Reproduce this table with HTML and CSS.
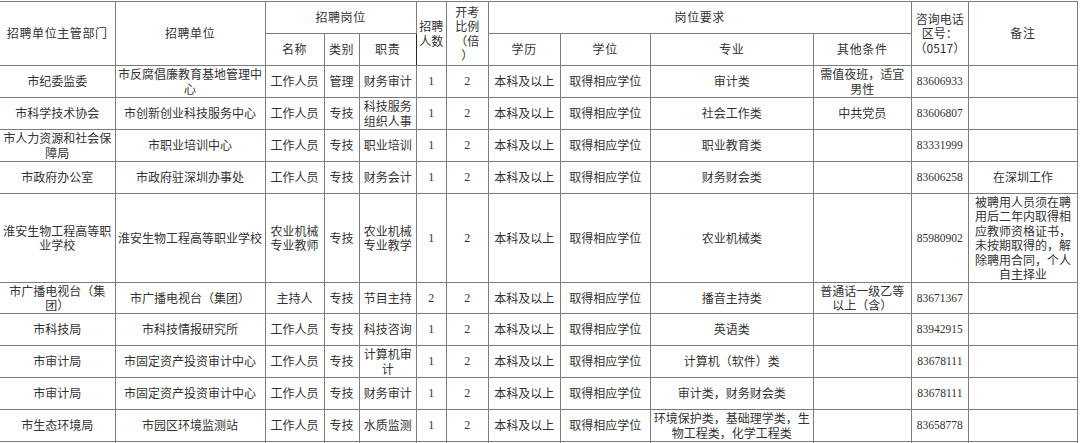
FILE: index.html
```html
<!DOCTYPE html>
<html lang="zh-CN">
<head>
<meta charset="utf-8">
<title>招聘岗位表</title>
<link rel="stylesheet" href="styles.css">
</head>
<body>
<div class="page">
<table class="jobs">
  <colgroup>
    <col class="w115"><col class="w150"><col class="w59"><col class="w35"><col class="w57">
    <col class="w30"><col class="w42"><col class="w72"><col class="w90"><col class="w163">
    <col class="w98"><col class="w57"><col class="w109">
  </colgroup>
  <thead>
    <tr>
      <th rowspan="2" class="first"><div class="c h2 sp">招聘单位主管部门</div></th>
      <th rowspan="2"><div class="c h2 sp">招聘单位</div></th>
      <th colspan="3"><div class="c h1 sp">招聘岗位</div></th>
      <th rowspan="2" class="dark"><div class="c h2">招聘人数</div></th>
      <th rowspan="2"><div class="c h2 ratio">开考比例（倍）</div></th>
      <th colspan="4"><div class="c h1 sp">岗位要求</div></th>
      <th rowspan="2"><div class="c h2">咨询电话区号：（0517）</div></th>
      <th rowspan="2"><div class="c h2 sp">备注</div></th>
    </tr>
    <tr>
      <th><div class="c h1 sp">名称</div></th>
      <th class="dark"><div class="c h1 sp">类别</div></th>
      <th class="dark"><div class="c h1 sp">职责</div></th>
      <th><div class="c h1 sp">学历</div></th>
      <th><div class="c h1 sp">学位</div></th>
      <th><div class="c h1 sp">专业</div></th>
      <th><div class="c h1 sp">其他条件</div></th>
    </tr>
  </thead>
  <tbody>
    <tr>
      <td class="first"><div class="c">市纪委监委</div></td>
      <td><div class="c">市反腐倡廉教育基地管理中心</div></td>
      <td><div class="c">工作人员</div></td>
      <td class="dark"><div class="c">管理</div></td>
      <td class="dark"><div class="c">财务审计</div></td>
      <td class="dark"><div class="c num">1</div></td>
      <td><div class="c num">2</div></td>
      <td><div class="c">本科及以上</div></td>
      <td><div class="c">取得相应学位</div></td>
      <td><div class="c">审计类</div></td>
      <td><div class="c">需值夜班，适宜男性</div></td>
      <td><div class="c tel">83606933</div></td>
      <td><div class="c"></div></td>
    </tr>
    <tr>
      <td class="first"><div class="c">市科学技术协会</div></td>
      <td><div class="c">市创新创业科技服务中心</div></td>
      <td><div class="c">工作人员</div></td>
      <td class="dark"><div class="c">专技</div></td>
      <td class="dark"><div class="c">科技服务组织人事</div></td>
      <td class="dark"><div class="c num">1</div></td>
      <td><div class="c num">2</div></td>
      <td><div class="c">本科及以上</div></td>
      <td><div class="c">取得相应学位</div></td>
      <td><div class="c">社会工作类</div></td>
      <td><div class="c">中共党员</div></td>
      <td><div class="c tel">83606807</div></td>
      <td><div class="c"></div></td>
    </tr>
    <tr>
      <td class="first"><div class="c">市人力资源和社会保障局</div></td>
      <td><div class="c">市职业培训中心</div></td>
      <td><div class="c">工作人员</div></td>
      <td class="dark"><div class="c">专技</div></td>
      <td class="dark"><div class="c">职业培训</div></td>
      <td class="dark"><div class="c num">1</div></td>
      <td><div class="c num">2</div></td>
      <td><div class="c">本科及以上</div></td>
      <td><div class="c">取得相应学位</div></td>
      <td><div class="c">职业教育类</div></td>
      <td><div class="c"></div></td>
      <td><div class="c tel">83331999</div></td>
      <td><div class="c"></div></td>
    </tr>
    <tr>
      <td class="first"><div class="c">市政府办公室</div></td>
      <td><div class="c">市政府驻深圳办事处</div></td>
      <td><div class="c">工作人员</div></td>
      <td class="dark"><div class="c">专技</div></td>
      <td class="dark"><div class="c">财务会计</div></td>
      <td class="dark"><div class="c num">1</div></td>
      <td><div class="c num">2</div></td>
      <td><div class="c">本科及以上</div></td>
      <td><div class="c">取得相应学位</div></td>
      <td><div class="c">财务财会类</div></td>
      <td><div class="c"></div></td>
      <td><div class="c tel">83606258</div></td>
      <td><div class="c">在深圳工作</div></td>
    </tr>
    <tr>
      <td class="first"><div class="c tall">淮安生物工程高等职业学校</div></td>
      <td><div class="c tall">淮安生物工程高等职业学校</div></td>
      <td><div class="c tall">农业机械专业教师</div></td>
      <td class="dark"><div class="c tall">专技</div></td>
      <td class="dark"><div class="c tall">农业机械专业教学</div></td>
      <td class="dark"><div class="c tall num">1</div></td>
      <td><div class="c tall num">2</div></td>
      <td><div class="c tall">本科及以上</div></td>
      <td><div class="c tall">取得相应学位</div></td>
      <td><div class="c tall">农业机械类</div></td>
      <td><div class="c tall"></div></td>
      <td><div class="c tall tel">85980902</div></td>
      <td><div class="c tall">被聘用人员须在聘用后二年内取得相应教师资格证书，未按期取得的，解除聘用合同，个人自主择业</div></td>
    </tr>
    <tr>
      <td class="first"><div class="c short">市广播电视台（集团）</div></td>
      <td><div class="c short">市广播电视台（集团）</div></td>
      <td><div class="c short">主持人</div></td>
      <td class="dark"><div class="c short">专技</div></td>
      <td class="dark"><div class="c short">节目主持</div></td>
      <td class="dark"><div class="c short num">2</div></td>
      <td><div class="c short num">2</div></td>
      <td><div class="c short">本科及以上</div></td>
      <td><div class="c short">取得相应学位</div></td>
      <td><div class="c short">播音主持类</div></td>
      <td><div class="c short">普通话一级乙等以上（含）</div></td>
      <td><div class="c short tel">83671367</div></td>
      <td><div class="c short"></div></td>
    </tr>
    <tr>
      <td class="first"><div class="c">市科技局</div></td>
      <td><div class="c">市科技情报研究所</div></td>
      <td><div class="c">工作人员</div></td>
      <td class="dark"><div class="c">专技</div></td>
      <td class="dark"><div class="c">科技咨询</div></td>
      <td class="dark"><div class="c num">1</div></td>
      <td><div class="c num">2</div></td>
      <td><div class="c">本科及以上</div></td>
      <td><div class="c">取得相应学位</div></td>
      <td><div class="c">英语类</div></td>
      <td><div class="c"></div></td>
      <td><div class="c tel">83942915</div></td>
      <td><div class="c"></div></td>
    </tr>
    <tr>
      <td class="first"><div class="c">市审计局</div></td>
      <td><div class="c">市固定资产投资审计中心</div></td>
      <td><div class="c">工作人员</div></td>
      <td class="dark"><div class="c">专技</div></td>
      <td class="dark"><div class="c">计算机审计</div></td>
      <td class="dark"><div class="c num">1</div></td>
      <td><div class="c num">2</div></td>
      <td><div class="c">本科及以上</div></td>
      <td><div class="c">取得相应学位</div></td>
      <td><div class="c">计算机（软件）类</div></td>
      <td><div class="c"></div></td>
      <td><div class="c tel">83678111</div></td>
      <td><div class="c"></div></td>
    </tr>
    <tr>
      <td class="first"><div class="c">市审计局</div></td>
      <td><div class="c">市固定资产投资审计中心</div></td>
      <td><div class="c">工作人员</div></td>
      <td class="dark"><div class="c">专技</div></td>
      <td class="dark"><div class="c">财务审计</div></td>
      <td class="dark"><div class="c num">1</div></td>
      <td><div class="c num">2</div></td>
      <td><div class="c">本科及以上</div></td>
      <td><div class="c">取得相应学位</div></td>
      <td><div class="c">审计类，财务财会类</div></td>
      <td><div class="c"></div></td>
      <td><div class="c tel">83678111</div></td>
      <td><div class="c"></div></td>
    </tr>
    <tr>
      <td class="first"><div class="c">市生态环境局</div></td>
      <td><div class="c">市园区环境监测站</div></td>
      <td><div class="c">工作人员</div></td>
      <td class="dark"><div class="c">专技</div></td>
      <td class="dark"><div class="c">水质监测</div></td>
      <td class="dark"><div class="c num">1</div></td>
      <td><div class="c num">2</div></td>
      <td><div class="c">本科及以上</div></td>
      <td><div class="c">取得相应学位</div></td>
      <td><div class="c">环境保护类，基础理学类，生物工程类，化学工程类</div></td>
      <td><div class="c"></div></td>
      <td><div class="c tel">83658778</div></td>
      <td><div class="c"></div></td>
    </tr>
    <tr>
      <td class="first"><div class="c"></div></td>
      <td><div class="c"></div></td>
      <td><div class="c"></div></td>
      <td class="dark"><div class="c"></div></td>
      <td class="dark"><div class="c"></div></td>
      <td class="dark"><div class="c"></div></td>
      <td><div class="c"></div></td>
      <td><div class="c"></div></td>
      <td><div class="c"></div></td>
      <td><div class="c"></div></td>
      <td><div class="c"></div></td>
      <td><div class="c"></div></td>
      <td><div class="c"></div></td>
    </tr>
  </tbody>
</table>
</div>
</body>
</html>
```

FILE: styles.css
```css
html, body {
  margin: 0;
  padding: 0;
  background: #ffffff;
}

.page {
  padding-top: 1px;
  overflow: hidden;
  height: 442px;
}

.jobs {
  border-collapse: collapse;
  table-layout: fixed;
  width: 1078px;
  font-family: "Noto Sans CJK SC", "Noto Sans", sans-serif;
  font-size: 12px;
  color: #333333;
}

.jobs th,
.jobs td {
  border: 1px solid #7c7c7c;
  padding: 0;
  font-weight: normal;
  vertical-align: middle;
}

.jobs .first {
  border-left: none;
}

.jobs td.dark,
.jobs th.dark {
  border-left-color: #262626;
}

.w115 { width: 115px; }
.w150 { width: 150px; }
.w59 { width: 59px; }
.w35 { width: 35px; }
.w57 { width: 57px; }
.w30 { width: 30px; }
.w42 { width: 42px; }
.w72 { width: 72px; }
.w90 { width: 90px; }
.w163 { width: 163px; }
.w98 { width: 98px; }
.w109 { width: 109px; }

.c {
  height: 31px;
  padding: 0 2px;
  display: flex;
  align-items: center;
  justify-content: center;
  text-align: center;
  line-height: 14.5px;
  overflow: visible;
}

.c.h1 { height: 31px; }
.c.h2 { height: 63px; }
.c.tall { height: 88px; }
.c.short { height: 30px; }

.ratio {
  padding: 0 5px;
  line-break: anywhere;
  text-spacing-trim: space-all;
}

.sp { letter-spacing: 0.6px; }

.num {
  font-family: "Liberation Serif", "DejaVu Serif", serif;
  font-size: 12px;
}

.tel {
  font-family: "Liberation Serif", "DejaVu Serif", serif;
  font-size: 11.5px;
}
```
